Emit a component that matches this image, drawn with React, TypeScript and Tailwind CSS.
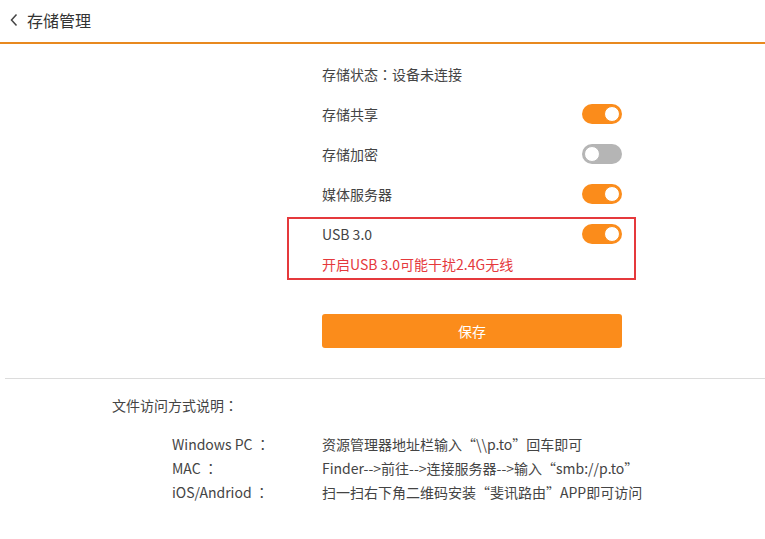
import React, { useState } from "react";

const font = {
  fontFamily: '"Noto Sans CJK SC", "Noto Sans", sans-serif',
};

// full-width colon centred in its cell, as in the reference
function Colon() {
  return <span style={{ fontFamily: '"Noto Sans CJK TC", sans-serif' }}>：</span>;
}

function Toggle({ on, onChange }: { on: boolean; onChange: () => void }) {
  return (
    <button
      type="button"
      onClick={onChange}
      className={`relative flex h-5 w-10 items-center rounded-full px-[2px] ${
        on ? "justify-end bg-[#fb8c1b]" : "justify-start bg-[#b5b5b5]"
      }`}
    >
      <span
        className={`block h-4 w-4 rounded-full border bg-white ${
          on ? "border-[#fb8c1b]" : "border-[#b5b5b5]"
        }`}
      />
    </button>
  );
}

export default function App() {
  const [share, setShare] = useState(true);
  const [encrypt, setEncrypt] = useState(false);
  const [media, setMedia] = useState(true);
  const [usb, setUsb] = useState(true);

  return (
    <div className="min-h-[539px] w-[765px] bg-white text-[14px] text-[#444]" style={font}>
      <header className="flex h-[44px] items-center border-b-2 border-[#e8891f] pl-[10px] pb-[2px]">
        <svg width="8" height="14" viewBox="0 0 8 14" className="mr-[9px]">
          <polyline points="6.5,1.5 1.5,7 6.5,12.5" fill="none" stroke="#444" strokeWidth="1.5" />
        </svg>
        <span className="text-[16px] text-[#333]">存储管理</span>
      </header>

      <div className="ml-[322px] w-[300px] pt-[10px]">
        <div className="flex h-10 items-center">
          存储状态<Colon />设备未连接
        </div>
        <div className="flex h-10 items-center justify-between">
          <span>存储共享</span>
          <Toggle on={share} onChange={() => setShare(!share)} />
        </div>
        <div className="flex h-10 items-center justify-between">
          <span>存储加密</span>
          <Toggle on={encrypt} onChange={() => setEncrypt(!encrypt)} />
        </div>
        <div className="flex h-10 items-center justify-between">
          <span>媒体服务器</span>
          <Toggle on={media} onChange={() => setMedia(!media)} />
        </div>

        <div className="mt-[3px] ml-[-35px] w-[349px] border-2 border-[#e5393c] pl-[33px] pr-[12px] pb-[4px]">
          <div className="flex h-[30px] items-center justify-between">
            <span>USB 3.0</span>
            <Toggle on={usb} onChange={() => setUsb(!usb)} />
          </div>
          <div className="mt-[5px] flex h-5 items-center text-[#e5393c]">开启USB 3.0可能干扰2.4G无线</div>
        </div>

        <button
          type="button"
          className="mt-[34px] h-[34px] w-[300px] rounded-[3px] bg-[#fb8c1b] text-[14px] text-white"
        >
          保存
        </button>
      </div>

      <div className="mt-[30px] ml-[5px] h-px bg-[#dcdcdc]" />

      <div className="pl-[112px] pt-[16px]">
        <div className="flex h-5 items-center">
          文件访问方式说明<Colon />
        </div>
        <div className="mt-[17px] grid grid-cols-[150px_1fr] pl-[60px] leading-[24px]">
          <span>
            Windows PC <Colon />
          </span>
          <span>资源管理器地址栏输入“\\p.to”回车即可</span>
          <span>
            MAC <Colon />
          </span>
          <span>Finder--&gt;前往--&gt;连接服务器--&gt;输入“smb://p.to”</span>
          <span>
            iOS/Andriod <Colon />
          </span>
          <span>扫一扫右下角二维码安装“斐讯路由”APP即可访问</span>
        </div>
      </div>
    </div>
  );
}
